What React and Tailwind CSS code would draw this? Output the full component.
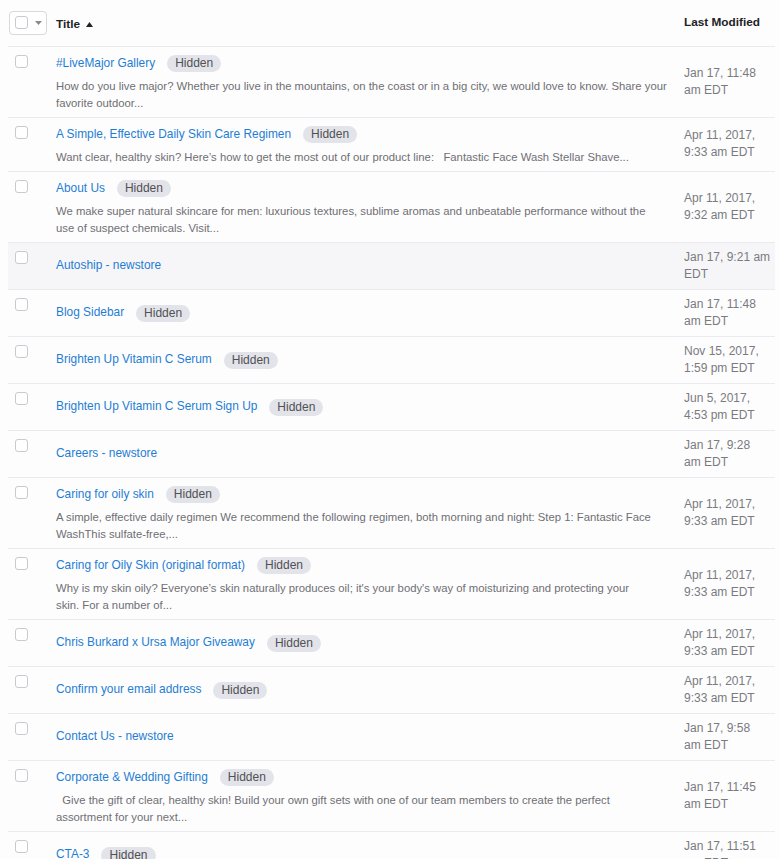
import React from "react";

const rows = [
  {
    title: "#LiveMajor Gallery",
    hidden: true,
    desc: [
      "How do you live major? Whether you live in the mountains, on the coast or in a big city, we would love to know. Share your",
      "favorite outdoor...",
    ],
    date: ["Jan 17, 11:48", "am EDT"],
  },
  {
    title: "A Simple, Effective Daily Skin Care Regimen",
    hidden: true,
    desc: ["Want clear, healthy skin? Here’s how to get the most out of our product line: \u00a0 Fantastic Face Wash Stellar Shave..."],
    date: ["Apr 11, 2017,", "9:33 am EDT"],
  },
  {
    title: "About Us",
    hidden: true,
    desc: [
      "We make super natural skincare for men: luxurious textures, sublime aromas and unbeatable performance without the",
      "use of suspect chemicals. Visit...",
    ],
    date: ["Apr 11, 2017,", "9:32 am EDT"],
  },
  { title: "Autoship - newstore", hover: true, date: ["Jan 17, 9:21 am", "EDT"] },
  { title: "Blog Sidebar", hidden: true, date: ["Jan 17, 11:48", "am EDT"] },
  { title: "Brighten Up Vitamin C Serum", hidden: true, date: ["Nov 15, 2017,", "1:59 pm EDT"] },
  { title: "Brighten Up Vitamin C Serum Sign Up", hidden: true, date: ["Jun 5, 2017,", "4:53 pm EDT"] },
  { title: "Careers - newstore", date: ["Jan 17, 9:28", "am EDT"] },
  {
    title: "Caring for oily skin",
    hidden: true,
    desc: [
      "A simple, effective daily regimen We recommend the following regimen, both morning and night: Step 1: Fantastic Face",
      "WashThis sulfate-free,...",
    ],
    date: ["Apr 11, 2017,", "9:33 am EDT"],
  },
  {
    title: "Caring for Oily Skin (original format)",
    hidden: true,
    desc: [
      "Why is my skin oily? Everyone’s skin naturally produces oil; it's your body's way of moisturizing and protecting your",
      "skin. For a number of...",
    ],
    date: ["Apr 11, 2017,", "9:33 am EDT"],
  },
  { title: "Chris Burkard x Ursa Major Giveaway", hidden: true, date: ["Apr 11, 2017,", "9:33 am EDT"] },
  { title: "Confirm your email address", hidden: true, date: ["Apr 11, 2017,", "9:33 am EDT"] },
  { title: "Contact Us - newstore", date: ["Jan 17, 9:58", "am EDT"] },
  {
    title: "Corporate & Wedding Gifting",
    hidden: true,
    desc: [
      "\u00a0 Give the gift of clear, healthy skin! Build your own gift sets with one of our team members to create the perfect",
      "assortment for your next...",
    ],
    date: ["Jan 17, 11:45", "am EDT"],
  },
  { title: "CTA-3", hidden: true, date: ["Jan 17, 11:51", "am EDT"] },
];

const Checkbox = () => (
  <span className="block h-[13px] w-[13px] rounded-[3px] border border-[#c9c9cf] bg-white"></span>
);

const Row = ({ row }) => {
  return (
    <tr className={`border-b border-[#ebebef] ${row.hover ? "bg-[#f6f6f9]" : ""}`}>
      <td className="w-[48px] pl-[7px] pt-[8px] align-top">
        <Checkbox />
      </td>
      <td className="pt-[6px] pb-[5px] pr-[14px] align-middle">
        <div className="flex h-[22px] items-center gap-[12px]">
          <span className="text-[11.9px] text-[#1f7dd3]">{row.title}</span>
          {row.hidden && (
            <span className="rounded-full bg-[#e3e4e9] px-[8px] text-[12px] leading-[17px] text-[#505055]">
              Hidden
            </span>
          )}
        </div>
        {row.desc && (
          <div className="mt-[3px] text-[11.3px] leading-[17px] text-[#6f6f73]">
            {row.desc.map((line, i) => (
              <div key={i} className="whitespace-nowrap">
                {line}
              </div>
            ))}
          </div>
        )}
      </td>
      <td className="w-[91px] py-[6px] align-middle text-[12px] leading-[17px] text-[#7a7a7f]">
        <div>{row.date[0]}</div>
        <div>{row.date[1]}</div>
      </td>
    </tr>
  );
};

export default function App() {
  return (
    <div className="min-h-screen bg-[#fdfdfe] pl-[8px] pr-[5px] font-['Liberation_Sans',Arial,sans-serif]">
      <table className="w-full border-collapse">
        <thead>
          <tr className="border-b border-[#ebebef]">
            <th className="h-[46px] pl-[1px] text-left align-middle">
              <div className="flex h-[24px] w-[38px] items-center gap-[7px] rounded-[4px] border border-[#d8d8dd] bg-white pl-[5px]">
                <Checkbox />
                <svg width="7" height="4" viewBox="0 0 7 4">
                  <path d="M0 0h7L3.5 4z" fill="#8a8a90" />
                </svg>
              </div>
            </th>
            <th className="text-left align-middle">
              <span className="inline-flex items-center gap-[6px] text-[11.8px] font-semibold text-[#222225]">
                Title
                <svg width="7" height="5" viewBox="0 0 7 5">
                  <path d="M0 5h7L3.5 0z" fill="#222225" />
                </svg>
              </span>
            </th>
            <th className="text-left align-middle text-[11.8px] font-semibold text-[#222225]">
              Last Modified
            </th>
          </tr>
        </thead>
        <tbody>
          {rows.map((row, i) => (
            <Row key={i} row={row} />
          ))}
        </tbody>
      </table>
    </div>
  );
}
